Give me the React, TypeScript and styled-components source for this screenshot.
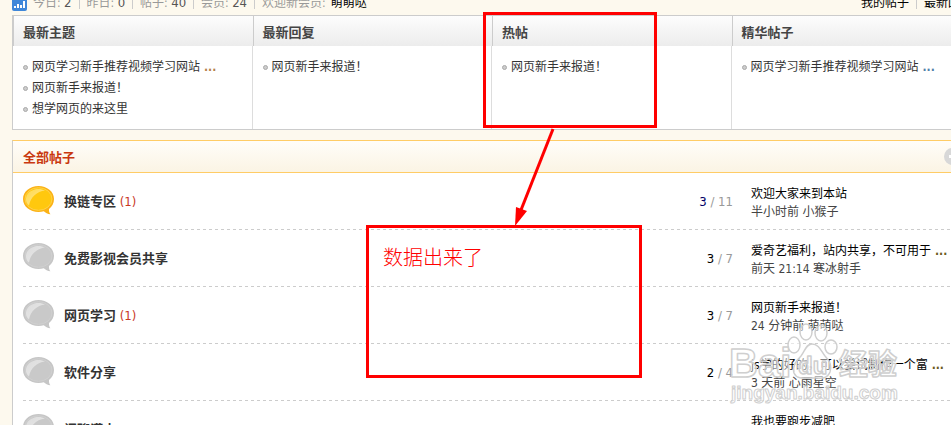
import React from "react";
import styled, { createGlobalStyle } from "styled-components";

const Global = createGlobalStyle`
  *, *::before { box-sizing: border-box; }
  html, body { margin: 0; overflow: hidden; }
  body {
    background: #fdf9ee;
    color: #333;
    font: 12px/18px "DejaVu Sans Condensed", "Noto Sans CJK SC", sans-serif;
  }
  a { color: inherit; text-decoration: none; }
  h2, h3, p, ul { margin: 0; padding: 0; font-size: inherit; }
`;

const Viewport = styled.div`
  position: relative;
  height: 100vh;
  overflow: hidden;
`;

const Page = styled.main`
  width: max(960px, calc(100% - 24px));
  margin: 0 12px;
`;

const TopBar = styled.div`
  display: flex;
  align-items: flex-end;
  justify-content: space-between;
  height: 15px;
  padding-bottom: 3px;
`;

const Stats = styled.div`
  display: flex;
  align-items: center;
  color: #999;
  white-space: nowrap;
`;

const ChartIcon = styled.svg`
  width: 15px;
  height: 15px;
  margin-right: 6px;
`;

const Figure = styled.em`
  font-size: 13px;
  font-style: normal;
  color: #555;
`;

const Divider = styled.i`
  width: 1px;
  height: 12px;
  margin: 0 7px;
  background: #ccc;
`;

const NewMember = styled.a`
  color: #000;
  margin-left: 5px;
`;

const QuickLinks = styled.nav`
  display: flex;
  align-items: center;
  width: 111px;
  color: #000;
  white-space: nowrap;
`;

const Digest = styled.div`
  display: grid;
  grid-template-columns: repeat(4, 1fr);
  border: 1px solid #ccc;
  background: #fff;
`;

const DigestColumn = styled.section`
  display: flex;
  flex-direction: column;
  min-width: 0;
`;

const DigestTitle = styled.h2`
  height: 30px;
  padding-left: 9px;
  border-left: 1px solid #ccc;
  background: linear-gradient(#fdfdfd, #ececec);
  color: #444;
  font-size: 13px;
  line-height: 33px;
`;

const DigestList = styled.ul`
  flex: 1;
  padding: 11px 10px 9px;
  border-right: 1px solid #ddd;
  list-style: none;
`;

const DigestItem = styled.li`
  display: flex;
  align-items: center;
  line-height: 21px;
  white-space: nowrap;
  &::before {
    content: "";
    width: 5px;
    height: 5px;
    margin-right: 4px;
    border: 1px solid #aaa;
    border-radius: 50%;
    background: #ccc;
  }
`;

const Board = styled.section`
  margin-top: 10px;
  border: 1px solid #ccc;
  border-top-color: #fc6;
  background: #fff;
`;

const BoardHead = styled.header`
  display: flex;
  align-items: center;
  justify-content: space-between;
  height: 32px;
  padding: 0 10px;
  border-bottom: 1px solid #fc6;
  background: linear-gradient(#fffdf9, #fbf4e4);
`;

const BoardTitle = styled.h2`
  padding-top: 2px;
  color: #c9380f;
  font-size: 13px;
  line-height: 29px;
`;

const CollapseButton = styled.button`
  display: flex;
  padding: 0;
  border: 0;
  background: none;
  svg { width: 17px; height: 17px; }
`;

const Forums = styled.table`
  width: calc(100% - 20px);
  margin: 0 10px;
  border-collapse: collapse;
  table-layout: fixed;
`;

const ForumRow = styled.tr`
  height: 57px;
  background: repeating-linear-gradient(90deg, #ccc 0 3px, transparent 3px 6px) 0 100% / 100% 1px no-repeat;
`;

const IconCell = styled.td`
  width: 41px;
  padding: 0 0 2px;
  svg { display: block; width: 31px; height: 29px; }
`;

const NameCell = styled.td`
  padding: 0;
`;

const ForumName = styled.h3`
  display: inline;
  font-size: 13px;
`;

const Fresh = styled.span`
  color: #c9381f;
  font-size: 13px;
`;

const CountCell = styled.td`
  width: 98px;
  padding: 0 18px 0 0;
  color: #999;
  font-size: 13px;
  text-align: right;
`;

const Topics = styled.span<{ $color: string }>`
  color: ${(p) => p.$color};
`;

const LastCell = styled.td`
  width: 210px;
  padding: 2px 0 0;
  white-space: nowrap;
`;

const Arrival = styled.p`
  color: #444;
`;

const Subject = styled.a`
  color: #000;
`;

const Dots = styled.span<{ $color: string }>`
  margin-left: 4px;
  color: ${(p) => p.$color};
  font-weight: bold;
`;

const Highlight = styled.div<{ $x: number; $y: number; $w: number; $h: number }>`
  position: absolute;
  left: ${(p) => p.$x}px;
  top: ${(p) => p.$y}px;
  width: ${(p) => p.$w}px;
  height: ${(p) => p.$h}px;
  border: 3px solid #f00;
`;

const Note = styled.p`
  padding: 16px 14px;
  color: #f00;
  font-size: 20px;
  line-height: 28px;
  font-weight: 300;
`;

const Arrow = styled.svg`
  position: absolute;
  left: 510px;
  top: 126px;
  width: 50px;
  height: 104px;
`;

const Watermark = styled.svg`
  position: absolute;
  left: 720px;
  top: 320px;
  width: 190px;
  height: 90px;
  fill: rgba(255, 255, 255, 0.5);
  stroke: #cfcfcf;
  stroke-width: 1.5px;
  stroke-linejoin: round;
  font-family: "Liberation Sans", "Noto Sans CJK SC", sans-serif;
  font-weight: bold;
  pointer-events: none;
`;

const Bubble = ({ id, active }: { id: string; active?: boolean }) => (
  <svg viewBox="0 0 31 29" aria-hidden="true">
    <defs>
      <linearGradient id={id} x1="0" y1="0" x2="1" y2="1">
        <stop offset="0" stopColor={active ? "#ffd84a" : "#dcdcdc"} />
        <stop offset="0.6" stopColor={active ? "#ffe27a" : "#e4e4e4"} />
        <stop offset="1" stopColor={active ? "#ffc90e" : "#c9c9c9"} />
      </linearGradient>
    </defs>
    <path
      d="M15.500 0C7 0 0 5.500 0 13S7 26 15.500 26c2 0 3.700-.3 5.300-.8 1.600 1.600 3.800 2.800 6.700 3.100-1.200-1.400-1.700-3-1.500-5.300C29 20.800 31 17 31 13 31 5.500 24 0 15.500 0Z"
      fill={active ? "#fbb216" : "#c6c6c6"}
    />
    <ellipse cx="15.500" cy="13" rx="13.500" ry="11.300" fill={active ? "#ffc80e" : "#c9c9c9"} stroke={active ? "#ffd24a" : "#d0d0d0"} />
    <path d="M6 19.500C1 15.500 2.500 8 8 5c4.500-2.700 10-2.600 14-.5C14 5.500 7.500 11 6 19.500Z" fill={`url(#${id})`} />
  </svg>
);

const digest = [
  { title: "最新主题", dots: "#b5804a", items: ["网页学习新手推荐视频学习网站", "网页新手来报道！", "想学网页的来这里"] },
  { title: "最新回复", items: ["网页新手来报道！"] },
  { title: "热帖", items: ["网页新手来报道！"] },
  { title: "精华帖子", dots: "#5080a8", items: ["网页学习新手推荐视频学习网站"] },
];

const forums = [
  { name: "换链专区", fresh: 1, active: true, topics: 3, posts: "11", tone: "#006", subject: "欢迎大家来到本站", by: "半小时前 小猴子" },
  { name: "免费影视会员共享", topics: 3, posts: "7", tone: "#000", subject: "爱奇艺福利，站内共享，不可用于", more: true, by: "前天 21:14 寒冰射手" },
  { name: "网页学习", fresh: 1, topics: 3, posts: "7", tone: "#000", subject: "网页新手来报道！", by: "24 分钟前 萌萌哒" },
  { name: "软件分享", topics: 2, posts: "4", tone: "#000", subject: "js学的好的，可以尝试制作一个富", more: true, by: "3 天前 心雨星空" },
  { name: "闲聊灌水", topics: 1, posts: "2", tone: "#000", subject: "我也要跑步减肥", by: "3 天前 萌萌哒" },
];

const stats = [["今日", "2"], ["昨日", "0"], ["帖子", "40"], ["会员", "24"]];

export default function App() {
  return (
    <Viewport>
      <Global />
      <Page>
        <TopBar>
          <Stats>
            <ChartIcon viewBox="0 0 15 15" aria-hidden="true">
              <rect width="15" height="15" rx="2" fill="#3f87d9" />
              <path d="M2 10h2v2H2zM5 8h2v4H5zM8 9h2v3H8zM11 5h2v7h-2z" fill="#fff" />
            </ChartIcon>
            {stats.map(([label, value]) => (
              <React.Fragment key={label}>
                <span>{label}: <Figure>{value}</Figure></span>
                <Divider />
              </React.Fragment>
            ))}
            <span>欢迎新会员:</span>
            <NewMember href="#">萌萌哒</NewMember>
          </Stats>
          <QuickLinks>
            <a href="#">我的帖子</a>
            <Divider />
            <a href="#">最新回复</a>
          </QuickLinks>
        </TopBar>

        <Digest>
          {digest.map((col) => (
            <DigestColumn key={col.title}>
              <DigestTitle>{col.title}</DigestTitle>
              <DigestList>
                {col.items.map((item, i) => (
                  <DigestItem key={item}>
                    <a href="#">{item}</a>
                    {col.dots && i === 0 && <Dots $color={col.dots}>...</Dots>}
                  </DigestItem>
                ))}
              </DigestList>
            </DigestColumn>
          ))}
        </Digest>

        <Board>
          <BoardHead>
            <BoardTitle>全部帖子</BoardTitle>
            <CollapseButton aria-label="收起">
              <svg viewBox="0 0 17 17">
                <circle cx="8.500" cy="8.500" r="8.500" fill="#d8d8d8" />
                <path d="M5 7h7v3H5z" fill="#fff" />
              </svg>
            </CollapseButton>
          </BoardHead>
          <Forums>
            <tbody>
              {forums.map((f, i) => (
                <ForumRow key={f.name}>
                  <IconCell><Bubble id={`shine${i}`} active={f.active} /></IconCell>
                  <NameCell>
                    <ForumName><a href="#">{f.name}</a></ForumName>
                    {f.fresh && <Fresh> ({f.fresh})</Fresh>}
                  </NameCell>
                  <CountCell><Topics $color={f.tone}>{f.topics}</Topics> / {f.posts}</CountCell>
                  <LastCell>
                    <Subject href="#">{f.subject}</Subject>
                    {f.more && <Dots $color="#6b5a20">...</Dots>}
                    <Arrival>{f.by}</Arrival>
                  </LastCell>
                </ForumRow>
              ))}
            </tbody>
          </Forums>
        </Board>
      </Page>

      <Highlight $x={483} $y={12} $w={174} $h={116} />
      <Arrow viewBox="0 0 50 104" aria-hidden="true">
        <path d="M43 3 11 84" stroke="#f00" strokeWidth="3" />
        <path d="M5 100 6 81 17 85Z" fill="#f00" />
      </Arrow>
      <Highlight $x={366} $y={225} $w={276} $h={153}>
        <Note>数据出来了</Note>
      </Highlight>
      <Watermark viewBox="0 0 190 90">
        <text x="9" y="57" fontSize="40">Bai</text>
        <ellipse cx="74" cy="25" rx="6" ry="8" />
        <ellipse cx="86" cy="12" rx="6" ry="8" />
        <ellipse cx="101" cy="13" rx="6" ry="8" />
        <ellipse cx="111" cy="27" rx="6" ry="7" />
        <path d="M92 24c7 0 9 7 13 12 5 5 7 10 5 16-3 8-11 6-18 6s-15 2-18-5c-2-7 2-12 7-17 4-5 5-12 11-12Z" />
        <text x="78" y="54" fontSize="24">du</text>
        <text x="119" y="55" fontSize="29">经验</text>
        <text x="11" y="79" fontSize="19" strokeWidth="1">jingyan.baidu.com</text>
      </Watermark>
    </Viewport>
  );
}
